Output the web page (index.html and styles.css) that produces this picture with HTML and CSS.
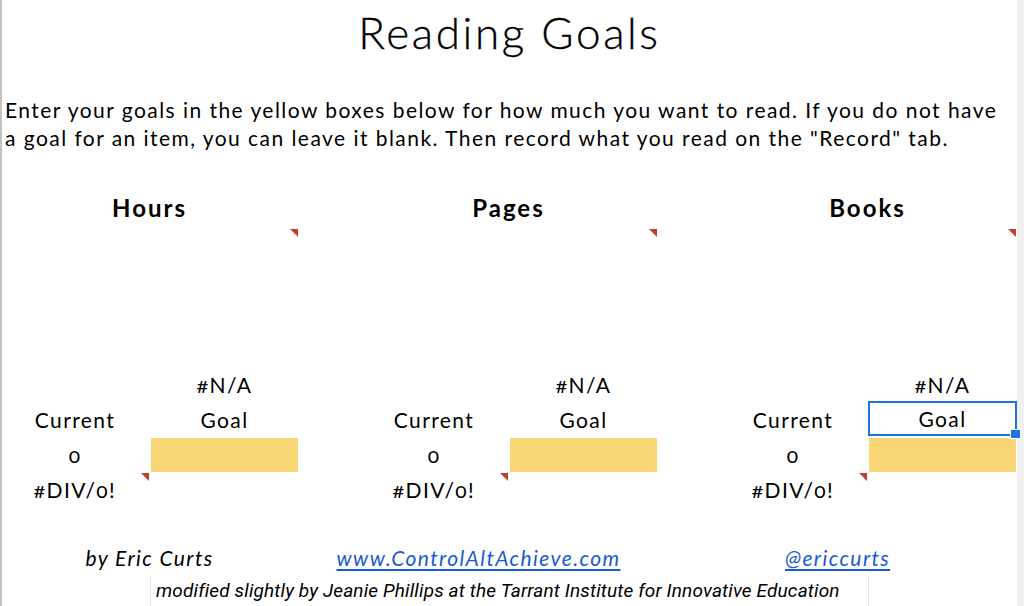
FILE: index.html
```html
<!DOCTYPE html>
<html lang="en">
<head>
<meta charset="utf-8">
<title>Reading Goals</title>
<link rel="stylesheet" href="styles.css">
</head>
<body>
<div class="page">
  <div class="sheet">
    <h1 class="title">Reading Goals</h1>
    <p class="intro">Enter your goals in the yellow boxes below for how much you want to read. If you do not have<br>a goal for an item, you can leave it blank. Then record what you read on the "Record" tab.</p>

    <div class="sections">
      <section class="section">
        <div class="head">Hours</div>
        <div class="chart note"></div>
        <div class="stats">
          <div class="cell"></div><div class="cell">#N/A</div>
          <div class="cell">Current</div><div class="cell">Goal</div>
          <div class="cell">0</div><div class="cell goal-input"></div>
          <div class="cell note">#DIV/0!</div><div class="cell"></div>
        </div>
      </section>
      <section class="section">
        <div class="head">Pages</div>
        <div class="chart note"></div>
        <div class="stats">
          <div class="cell"></div><div class="cell">#N/A</div>
          <div class="cell">Current</div><div class="cell">Goal</div>
          <div class="cell">0</div><div class="cell goal-input"></div>
          <div class="cell note">#DIV/0!</div><div class="cell"></div>
        </div>
      </section>
      <section class="section">
        <div class="head">Books</div>
        <div class="chart note"></div>
        <div class="stats">
          <div class="cell"></div><div class="cell">#N/A</div>
          <div class="cell">Current</div><div class="cell selected">Goal</div>
          <div class="cell">0</div><div class="cell goal-input"></div>
          <div class="cell note">#DIV/0!</div><div class="cell"></div>
        </div>
      </section>
    </div>

    <div class="credits">
      <div class="credit">by Eric Curts</div>
      <div class="credit"><a href="#">www.ControlAltAchieve.com</a></div>
      <div class="credit"><a href="#">@ericcurts</a></div>
    </div>

    <div class="modified-row">
      <div class="modified">modified slightly by Jeanie Phillips at the Tarrant Institute for Innovative Education</div>
    </div>
  </div>
  <div class="scrollbar"></div>
</div>
</body>
</html>
```

FILE: styles.css
```css
* { box-sizing: border-box; }

html, body {
  margin: 0;
  padding: 0;
  background: #ffffff;
}

body {
  width: 1024px;
  height: 606px;
  overflow: hidden;
  font-family: "Lato", "Open Sans", sans-serif;
  font-variant-numeric: oldstyle-nums;
  color: #000000;
}

.page {
  display: flex;
  width: 1024px;
  height: 606px;
}

.sheet {
  width: 1017px;
  border-left: 2px solid #c4c4c4;
  display: flex;
  flex-direction: column;
}

.scrollbar {
  width: 7px;
  background: #f1f1f1;
}

.title {
  margin: 0;
  height: 66px;
  line-height: 64px;
  text-align: center;
  font-size: 44px;
  font-weight: 300;
  letter-spacing: 2.6px;
  -webkit-text-stroke: 0.3px #000;
}

.intro {
  margin: 30px 0 0 0;
  padding-left: 3px;
  font-size: 21px;
  line-height: 28px;
  white-space: nowrap;
  letter-spacing: 1.45px;
}

.sections {
  margin-top: 38px;
  display: flex;
  gap: 60px;
  margin-left: -2px;
}

.section {
  width: 299px;
  display: flex;
  flex-direction: column;
}

.head {
  height: 38px;
  line-height: 36px;
  text-align: center;
  font-size: 24px;
  font-weight: 700;
  letter-spacing: 2px;
}

.chart {
  height: 139px;
}

.note { position: relative; }

.note::after {
  content: "";
  position: absolute;
  top: 1px;
  right: 1px;
  width: 0;
  height: 0;
  border-top: 8px solid #c0412b;
  border-left: 8px solid transparent;
}

.stats {
  display: grid;
  grid-template-columns: 150px 149px;
  grid-auto-rows: 35px;
}

.cell {
  text-align: center;
  font-size: 21px;
  line-height: 35px;
  letter-spacing: 1.4px;
}

.goal-input {
  background: #f9d776;
  margin: 1px 1px 0 1px;
}

.selected {
  position: relative;
  border: 2px solid #1a73e8;
  line-height: 31px;
  margin-top: -1px;
  margin-bottom: 1px;
}

.selected::after {
  content: "";
  position: absolute;
  right: -6px;
  bottom: -5px;
  width: 9px;
  height: 8px;
  background: #1a73e8;
  border: 1px solid #ffffff;
}

.credits {
  margin-top: 32px;
  margin-left: -2px;
  display: grid;
  grid-template-columns: 299px 359px 359px;
  height: 37px;
}

.credit {
  text-align: center;
  font-size: 21px;
  line-height: 37px;
  font-style: italic;
  letter-spacing: 1.4px;
}

.credit a {
  color: #1a5ad6;
  text-decoration: underline;
  text-underline-offset: 3px;
}

.modified-row {
  margin-left: 148px;
  width: 719px;
  flex: 1;
  border-left: 1px solid #e2e2e2;
  border-right: 1px solid #e2e2e2;
}

.modified {
  font-family: "Roboto", "Liberation Sans", sans-serif;
  font-style: italic;
  font-size: 19px;
  line-height: 30px;
  padding-left: 5px;
  white-space: nowrap;
  letter-spacing: 0.15px;
}
```
